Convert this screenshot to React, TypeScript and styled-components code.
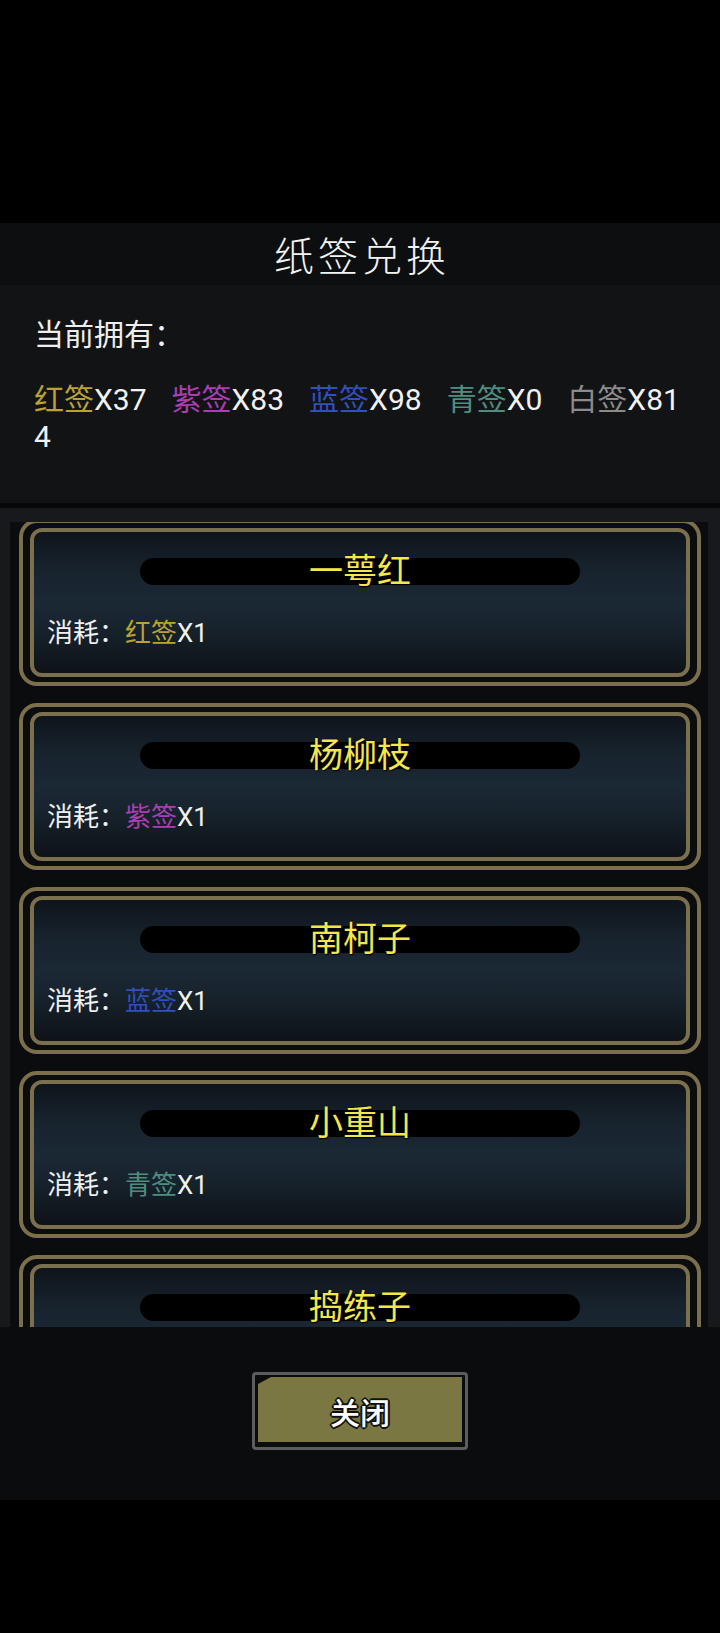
import styled, { createGlobalStyle } from 'styled-components'

const GOLD = '#7b6f4d';

const GlobalStyle = createGlobalStyle`
  html, body {
    margin: 0;
    padding: 0;
    background: #000;
  }

  body {
    font-family: Roboto, "Noto Sans CJK SC", sans-serif;
  }
`;

const tickets = [
  { name: '红签', color: '#bba233', count: 37 },
  { name: '紫签', color: '#a83fb2', count: 83 },
  { name: '蓝签', color: '#3150b8', count: 98 },
  { name: '青签', color: '#4f8d80', count: 0 },
  { name: '白签', color: '#8b8b8b', count: 814 },
];

const poems = [
  { title: '一萼红', cost: 0 },
  { title: '杨柳枝', cost: 1 },
  { title: '南柯子', cost: 2 },
  { title: '小重山', cost: 3 },
  { title: '捣练子', cost: 4 },
];

const App = () => {
  return (
    <Screen>
      <GlobalStyle />
      <Dialog>
        <Header>
          <Title>纸签兑换</Title>
        </Header>

        <Owned>
          <OwnedLabel>当前拥有：</OwnedLabel>
          <TicketLine>
            {tickets.map((t) => (
              <Ticket key={t.name}>
                <TicketName $color={t.color}>{t.name}</TicketName>X{t.count}
              </Ticket>
            ))}
          </TicketLine>
        </Owned>

        <ListFrame>
          <ListViewport>
            {poems.map((p) => {
              const ticket = tickets[p.cost];
              return (
                <Card key={p.title}>
                  <CardInner>
                    <TitleBar>
                      <CardTitle>{p.title}</CardTitle>
                    </TitleBar>
                    <Cost>
                      消耗：<TicketName $color={ticket.color}>{ticket.name}</TicketName>X1
                    </Cost>
                  </CardInner>
                </Card>
              );
            })}
          </ListViewport>
        </ListFrame>

        <Footer>
          <CloseButton>
            <CloseFace>关闭</CloseFace>
          </CloseButton>
        </Footer>
      </Dialog>
    </Screen>
  );
};

const Screen = styled.div`
  width: 720px;
  min-height: 1633px;
  box-sizing: border-box;
  padding-top: 223px;
  background: #000;
`;

const Dialog = styled.div`
  display: flex;
  flex-direction: column;
`;

const Header = styled.div`
  height: 62px;
  display: flex;
  align-items: center;
  justify-content: center;
  background: #0d0e10;
`;

const Title = styled.h1`
  margin: 0;
  padding-left: 4px;
  font-family: "Noto Sans CJK SC", serif;
  font-size: 40px;
  font-weight: 300;
  letter-spacing: 4px;
  color: #f4f4f4;
`;

const Owned = styled.div`
  height: 223px;
  box-sizing: border-box;
  padding: 31px 34px 0;
  background: #121315;
  border-bottom: 5px solid #060708;
`;

const OwnedLabel = styled.div`
  font-size: 30px;
  line-height: 37px;
  color: #eeeeee;
`;

const TicketLine = styled.div`
  margin-top: 28px;
  font-size: 30px;
  line-height: 37px;
  color: #f2f2f2;
  word-break: break-all;
`;

const Ticket = styled.span`
  margin-right: 25px;
`;

const TicketName = styled.span<{ $color: string }>`
  color: ${(p) => p.$color};
`;

const ListFrame = styled.div`
  height: 819px;
  box-sizing: border-box;
  padding: 14px 12px 0 10px;
  display: flex;
  flex-direction: column;
  background: #17191c;
`;

const ListViewport = styled.div`
  flex: 1;
  overflow: hidden;
  display: flex;
  flex-direction: column;
  gap: 17px;
  padding: 0 7px 0 9px;
  background: #0a0c0e;

  & > :first-child {
    margin-top: -3px;
  }
`;

const Card = styled.div`
  flex-shrink: 0;
  height: 167px;
  box-sizing: border-box;
  padding: 5px 7px;
  border: 4px solid ${GOLD};
  border-radius: 18px;
`;

const CardInner = styled.div`
  height: 100%;
  box-sizing: border-box;
  padding-top: 26px;
  border: 4px solid ${GOLD};
  border-radius: 12px;
  background: linear-gradient(180deg, #0e141b 0%, #17222c 25%, #1b2935 50%, #16212a 72%, #0d1217 100%);
`;

const TitleBar = styled.div`
  width: 440px;
  height: 27px;
  margin: 0 auto;
  display: flex;
  align-items: center;
  justify-content: center;
  border-radius: 14px;
  background: #000;
`;

const CardTitle = styled.span`
  font-size: 34px;
  line-height: 27px;
  color: #f3e74c;
  text-shadow: 0 0 2px #000, 1px 1px 1px #000;
`;

const Cost = styled.div`
  margin-top: 33px;
  padding-left: 13px;
  font-size: 26px;
  line-height: 30px;
  color: #f0f0f0;
`;

const Footer = styled.div`
  height: 173px;
  box-sizing: border-box;
  padding-top: 45px;
  display: flex;
  justify-content: center;
  align-items: flex-start;
  background: #0a0c0e;
`;

const CloseButton = styled.button`
  width: 216px;
  height: 78px;
  box-sizing: border-box;
  padding: 2px 3px 5px 3px;
  border: 3px solid #5c5d5f;
  border-radius: 4px;
  background: #0b0c0e;
  cursor: pointer;
`;

const CloseFace = styled.div`
  height: 100%;
  box-sizing: border-box;
  padding-top: 3px;
  display: flex;
  align-items: center;
  justify-content: center;
  background: #7b7742;
  clip-path: polygon(13px 0, 100% 0, 100% 100%, 0 100%, 0 7px);
  font-family: Roboto, "Noto Sans CJK SC", sans-serif;
  font-size: 30px;
  font-weight: 500;
  color: #fff;
  text-shadow: -2px 0 0 #111, 2px 0 0 #111, 0 -2px 0 #111, 0 2px 0 #111,
    -1px -1px 0 #111, 1px 1px 0 #111, -1px 1px 0 #111, 1px -1px 0 #111;
`;

export default App
